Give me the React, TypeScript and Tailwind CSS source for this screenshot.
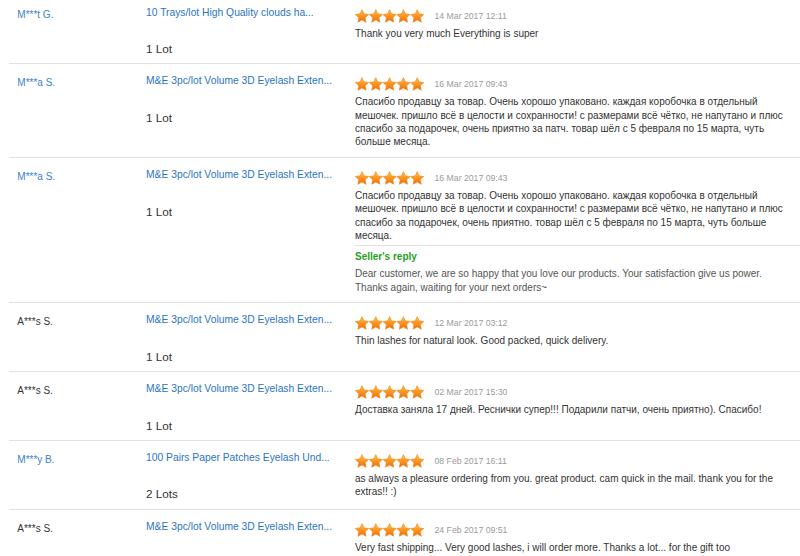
import React, { useId } from "react";

type Review = {
  name: string;
  nameBlue: boolean;
  product: string;
  lots?: string;
  date: string;
  lines: string[];
  reply?: string[];
  divider?: boolean;
};

const reviews: Review[] = [
  {
    name: "M***t G.",
    nameBlue: true,
    product: "10 Trays/lot High Quality clouds ha...",
    lots: "1 Lot",
    date: "14 Mar 2017 12:11",
    lines: ["Thank you very much Everything is super"],
  },
  {
    name: "M***a S.",
    nameBlue: true,
    product: "M&E 3pc/lot Volume 3D Eyelash Exten...",
    lots: "1 Lot",
    date: "16 Mar 2017 09:43",
    lines: [
      "Спасибо продавцу за товар. Очень хорошо упаковано. каждая коробочка в отдельный",
      "мешочек. пришло всё в целости и сохранности! с размерами всё чётко, не напутано и плюс",
      "спасибо за подарочек, очень приятно за патч. товар шёл с 5 февраля по 15 марта, чуть",
      "больше месяца.",
    ],
  },
  {
    name: "M***a S.",
    nameBlue: true,
    product: "M&E 3pc/lot Volume 3D Eyelash Exten...",
    lots: "1 Lot",
    date: "16 Mar 2017 09:43",
    lines: [
      "Спасибо продавцу за товар. Очень хорошо упаковано. каждая коробочка в отдельный",
      "мешочек. пришло всё в целости и сохранности! с размерами всё чётко, не напутано и плюс",
      "спасибо за подарочек, очень приятно. товар шёл с 5 февраля по 15 марта, чуть больше",
      "месяца.",
    ],
    reply: [
      "Dear customer, we are so happy that you love our products. Your satisfaction give us power.",
      "Thanks again, waiting for your next orders~",
    ],
  },
  {
    name: "A***s S.",
    nameBlue: false,
    product: "M&E 3pc/lot Volume 3D Eyelash Exten...",
    lots: "1 Lot",
    date: "12 Mar 2017 03:12",
    lines: ["Thin lashes for natural look. Good packed, quick delivery."],
  },
  {
    name: "A***s S.",
    nameBlue: false,
    product: "M&E 3pc/lot Volume 3D Eyelash Exten...",
    lots: "1 Lot",
    date: "02 Mar 2017 15:30",
    lines: [
      "Доставка заняла 17 дней. Реснички супер!!! Подарили патчи, очень приятно). Спасибо!",
    ],
  },
  {
    name: "M***y B.",
    nameBlue: true,
    product: "100 Pairs Paper Patches Eyelash Und...",
    lots: "2 Lots",
    date: "08 Feb 2017 16:11",
    lines: [
      "as always a pleasure ordering from you. great product. cam quick in the mail. thank you for the",
      "extras!! :)",
    ],
  },
  {
    name: "A***s S.",
    nameBlue: false,
    product: "M&E 3pc/lot Volume 3D Eyelash Exten...",
    date: "24 Feb 2017 09:51",
    lines: [
      "Very fast shipping... Very good lashes, i will order more. Thanks a lot... for the gift too",
    ],
    divider: true,
  },
];

const STAR =
  "7,0.3 9.0,4.55 13.66,5.14 10.23,8.35 11.11,12.96 7,10.7 2.89,12.96 3.77,8.35 0.34,5.14 5.0,4.55";

function Stars() {
  const id = useId().replace(/:/g, "");
  return (
    <svg width="69" height="14" viewBox="0 0 69 14" className="block">
      <defs>
        <linearGradient id={`g${id}`} x1="0" y1="0" x2="0" y2="1">
          <stop offset="0" stopColor="#ffc45a" />
          <stop offset="0.45" stopColor="#fb9a25" />
          <stop offset="1" stopColor="#ee6a0c" />
        </linearGradient>
      </defs>
      {[0, 1, 2, 3, 4].map((i) => (
        <polygon
          key={i}
          points={STAR}
          transform={`translate(${i * 13.8} 0.3)`}
          fill={`url(#g${id})`}
          stroke="#f08a1c"
          strokeWidth="0.6"
          strokeLinejoin="round"
        />
      ))}
    </svg>
  );
}

function Row({ r }: { r: Review }) {
  return (
    <div className="flex border-b border-[#e2e2e2]">
      <div className="w-[137px] shrink-0 pl-[8.3px] pt-[13px]">
        <div
          className={`text-[10px] leading-[12px] ${
            r.nameBlue ? "text-[#3d7fcc]" : "text-[#333333]"
          }`}
        >
          {r.name}
        </div>
      </div>
      <div className="w-[209px] shrink-0 pt-[11px] pb-[7.2px]">
        <div className="text-[10.3px] leading-[12px] text-[#2a74c6] whitespace-nowrap">
          {r.product}
        </div>
        {r.lots ? (
          <div className="mt-[23.5px] text-[11.7px] leading-[14px] text-[#333333]">
            {r.lots}
          </div>
        ) : (
          <div className="mt-[23.5px] h-[14px]" />
        )}
      </div>
      <div className="flex-1 pt-[13px] pb-[8.6px]">
        <div className="flex h-[14px] items-center">
          <Stars />
          <span className="ml-[10.5px] text-[8.7px] text-[#9a9a9a] leading-[14px]">
            {r.date}
          </span>
        </div>
        <div className="mt-[4px] text-[10px] leading-[13.33px] text-[#333333]">
          {r.lines.map((l, i) => (
            <div key={i} className="whitespace-nowrap">
              {l}
            </div>
          ))}
        </div>
        {r.reply && (
          <div className="mt-[3px] border-t border-[#e2e2e2] pt-[4px]">
            <div className="text-[10px] font-bold leading-[13.33px] text-[#24a024]">
              Seller's reply
            </div>
            <div className="mt-[3.5px] text-[10px] leading-[13.33px] text-[#555555]">
              {r.reply.map((l, i) => (
                <div key={i} className="whitespace-nowrap">
                  {l}
                </div>
              ))}
            </div>
          </div>
        )}
        {r.divider && <div className="mt-[3px] h-[40px] border-t border-[#e2e2e2]" />}
      </div>
    </div>
  );
}

export default function App() {
  return (
    <div
      className="h-[556px] w-[800px] overflow-hidden bg-white"
      style={{ fontFamily: '"Liberation Sans", Arial, sans-serif' }}
    >
      <div className="-mt-[4.5px] pl-[9px]">
        {reviews.map((r, i) => (
          <Row key={i} r={r} />
        ))}
      </div>
    </div>
  );
}
